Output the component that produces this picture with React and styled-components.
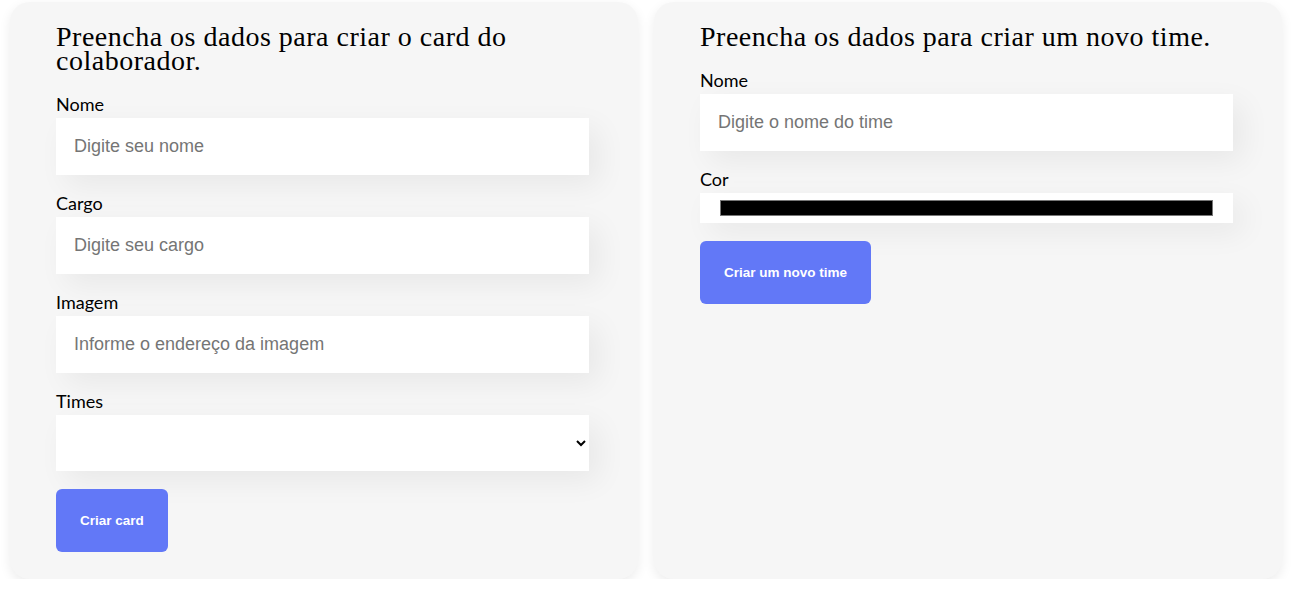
import React from 'react';
import styled, { createGlobalStyle } from 'styled-components';

const GlobalStyle = createGlobalStyle`
	* {
		box-sizing: border-box;
	}
	body {
		margin: 0;
		background: #fff;
		font-family: 'Lato', 'Liberation Sans', sans-serif;
	}
`;

const Field = ({ label, children }) => (
	<FieldBox>
		<Label>{label}</Label>
		{children}
	</FieldBox>
);

const App = () => {
	return (
		<>
			<GlobalStyle />
			<Page>
				<Card>
					<Form onSubmit={(e) => e.preventDefault()}>
						<Title>Preencha os dados para criar o card do colaborador.</Title>
						<Field label="Nome">
							<TextInput placeholder="Digite seu nome" />
						</Field>
						<Field label="Cargo">
							<TextInput placeholder="Digite seu cargo" />
						</Field>
						<Field label="Imagem">
							<TextInput placeholder="Informe o endereço da imagem" />
						</Field>
						<Field label="Times">
							<Select defaultValue="">
								<option value=""></option>
							</Select>
						</Field>
						<Button type="submit">Criar card</Button>
					</Form>
				</Card>
				<Card>
					<Form onSubmit={(e) => e.preventDefault()}>
						<Title>Preencha os dados para criar um novo time.</Title>
						<Field label="Nome">
							<TextInput placeholder="Digite o nome do time" />
						</Field>
						<Field label="Cor">
							<ColorInput type="color" defaultValue="#000000" />
						</Field>
						<Button type="submit">Criar um novo time</Button>
					</Form>
				</Card>
			</Page>
		</>
	);
};

export default App;

const Page = styled.main`
	display: grid;
	grid-template-columns: 1fr 1fr;
	gap: 16px;
	padding: 2px 12px 0 10px;
`;

const Card = styled.section`
	background-color: #f6f6f6;
	border-radius: 20px;
	box-shadow: 0 4px 12px rgba(0, 0, 0, 0.08);
	padding: 22px 49px 27px 46px;
`;

const Form = styled.form`
	display: flex;
	flex-direction: column;
	align-items: flex-start;
	gap: 16px;
`;

const Title = styled.h2`
	margin: 1px 0 3px;
	font-family: 'Liberation Serif', 'DejaVu Serif', serif;
	font-weight: 400;
	font-size: 28px;
	line-height: 24px;
	letter-spacing: 0.5px;
	color: #000;
`;

const FieldBox = styled.div`
	width: 100%;
	display: flex;
	flex-direction: column;
	gap: 2px;
`;

const Label = styled.label`
	font-size: 18px;
	line-height: 24px;
	color: #000;
`;

const TextInput = styled.input`
	width: 100%;
	border: none;
	outline: none;
	background: #fff;
	padding: 18px;
	font-family: 'Liberation Sans', Arial, sans-serif;
	font-size: 18px;
	line-height: 21px;
	box-shadow: 10px 10px 30px rgba(0, 0, 0, 0.06);

	&::placeholder {
		color: #757575;
	}
`;

const Select = styled.select`
	width: 100%;
	height: 56px;
	border: none;
	outline: none;
	background: #fff;
	padding: 0 4px 0 18px;
	font-family: 'Liberation Sans', Arial, sans-serif;
	font-size: 18px;
	box-shadow: 10px 10px 30px rgba(0, 0, 0, 0.06);
`;

const ColorInput = styled.input`
	width: 100%;
	height: 30px;
	border: none;
	padding: 0;
	background: #fff;
	cursor: pointer;
	box-shadow: 10px 10px 30px rgba(0, 0, 0, 0.06);

	&::-webkit-color-swatch-wrapper {
		padding: 7px 20px;
	}
	&::-webkit-color-swatch {
		border: 1px solid #777;
		border-radius: 0;
	}
`;

const Button = styled.button`
	margin-top: 2px;
	border: none;
	border-radius: 6px;
	background-color: #6278f7;
	color: #fff;
	padding: 24px;
	font-family: 'Liberation Sans', Arial, sans-serif;
	font-weight: 700;
	font-size: 13.5px;
	line-height: 15px;
	cursor: pointer;
`;
